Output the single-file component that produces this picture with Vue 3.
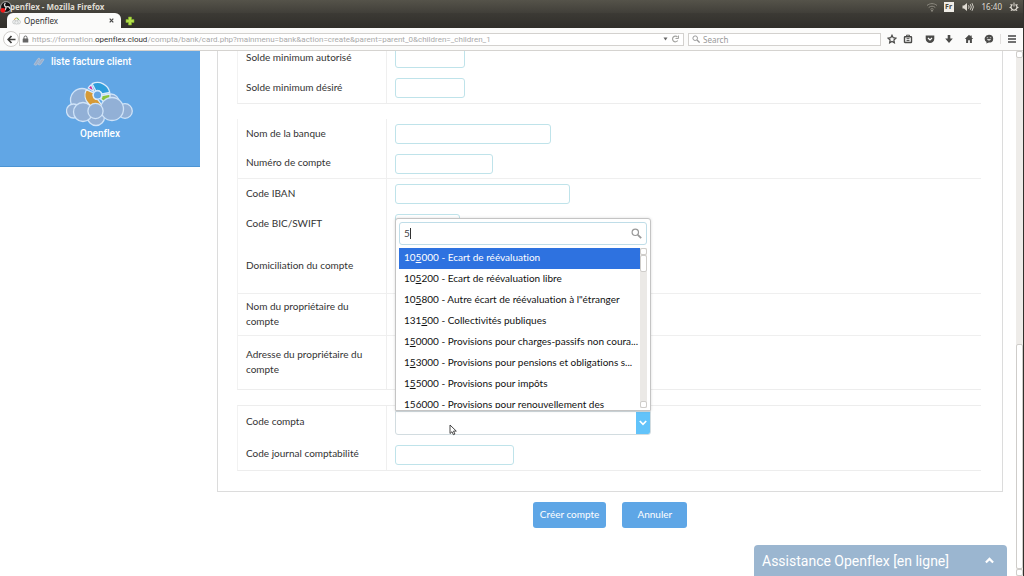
<script setup>
import { ref } from 'vue'

const query = ref('5')
const pageSearch = ref('')

const accounts = [
  { pre: '10', hit: '5', post: '000 - Ecart de réévaluation' },
  { pre: '10', hit: '5', post: '200 - Ecart de réévaluation libre' },
  { pre: '10', hit: '5', post: '800 - Autre écart de réévaluation à l"étranger' },
  { pre: '131', hit: '5', post: '00 - Collectivités publiques' },
  { pre: '1', hit: '5', post: '0000 - Provisions pour charges-passifs non coura...' },
  { pre: '1', hit: '5', post: '3000 - Provisions pour pensions et obligations s...' },
  { pre: '1', hit: '5', post: '5000 - Provisions pour impôts' },
  { pre: '1', hit: '5', post: '6000 - Provisions pour renouvellement des' },
]

const bankRows = [
  { id: 'banque', label: 'Nom de la banque', size: 'w-bank' },
  { id: 'numero', label: 'Numéro de compte', size: 'w-number', ruled: true },
  { id: 'iban', label: 'Code IBAN', size: 'w-iban' },
  { id: 'bic', label: 'Code BIC/SWIFT', size: 'w-bic' },
  { id: 'domiciliation', label: 'Domiciliation du compte', area: true, row: 'r-dom', ruled: true },
  { id: 'proprietaire', label: 'Nom du propriétaire du compte', size: 'w-bank', row: 'r-owner', ruled: true },
  { id: 'adresse', label: 'Adresse du propriétaire du compte', area: true, row: 'r-address' },
]
</script>

<template>
  <div class="window">
    <header class="titlebar">
      <svg class="app-icon" viewBox="0 0 12 12" aria-hidden="true">
        <circle cx="6" cy="6" r="5.4" fill="#111" stroke="#ddd" stroke-width="0.7" />
        <path d="M6 6C4 5 4 3 5.500 2M6 6c2-1 4 0 4 2M6 6c0 2-1 3.500-3 3.500" fill="none" stroke="#ddd" stroke-width="1.300" />
        <circle cx="2.900" cy="9.300" r="2.400" fill="#f01818" />
      </svg>
      <span class="window-title">penflex - Mozilla Firefox</span>
      <div class="tray">
        <svg width="12" height="12" viewBox="0 0 12 12" fill="none" stroke="#8d8a80" aria-hidden="true">
          <path d="M1 4.500c3-2.500 7-2.500 10 0M2.700 6.500c2-1.700 4.600-1.700 6.600 0M4.400 8.300c1-.8 2.200-.8 3.200 0" />
          <circle cx="6" cy="9.700" r="0.600" fill="#aaa79d" />
        </svg>
        <span class="lang">Fr</span>
        <svg width="12" height="12" viewBox="0 0 12 12" fill="none" stroke="#dfdbd2" aria-hidden="true">
          <path d="M.5 4.500H2L5 2v8L2 7.500H.5z" fill="#dfdbd2" stroke="none" />
          <path d="M6.500 4.300q1.200 1.700 0 3.400M8.300 3.200q2 2.800 0 5.600M10 2.200q2.800 3.800 0 7.600" stroke-width="0.900" />
        </svg>
        <time>16:40</time>
        <svg width="10" height="10" viewBox="0 0 10 10" fill="none" stroke="#dfdbd2" aria-hidden="true">
          <path d="M3.500 2.500a3 3 0 1 0 3 0" stroke-width="1.300" />
          <path d="M5 .5v4M.5 5.500h1.500M8 5.500h1.500M1.800 9l1-1M8.200 9l-1-1M1.500 2l1 1M8.500 2l-1 1" />
        </svg>
      </div>
    </header>

    <nav class="tabs" aria-label="Onglets">
      <div class="tab">
        <svg width="9" height="9" viewBox="0 0 9 9" aria-hidden="true">
          <g fill="#eef0f0" stroke="#b8bcbc" stroke-width="0.600">
            <circle cx="2.500" cy="6" r="1.900" /><circle cx="6.500" cy="6" r="2" /><circle cx="4.500" cy="6.500" r="1.700" />
          </g>
          <path d="M2.500 4a2 2 0 0 1 2-2" fill="none" stroke="#e0a950" />
          <path d="M4.500 2a2 2 0 0 1 2 2" fill="none" stroke="#72b54a" />
        </svg>
        <span class="tab-name">Openflex</span>
        <button class="bare" aria-label="Fermer l'onglet">
          <svg width="5" height="5" viewBox="0 0 5 5"><path d="M.7.7l3.600 3.600M4.300.7.7 4.300" stroke="#444" stroke-width="1.200" /></svg>
        </button>
      </div>
      <button class="bare new-tab" aria-label="Nouvel onglet">
        <svg width="10" height="10" viewBox="0 0 10 10"><path d="M3.500 1h3v2.500H9v3H6.500V9h-3V6.500H1v-3h2.500z" fill="#b4e04a" stroke="#7fae2a" stroke-width="0.600" /></svg>
      </button>
    </nav>

    <div class="toolbar">
      <button class="back" aria-label="Retour">
        <svg width="9" height="9" viewBox="0 0 9 9" fill="none" stroke="#3f3f3d" stroke-width="1.700"><path d="M8.500 4.500h-7M4.500 1 1.200 4.500 4.500 8" /></svg>
      </button>
      <div class="address">
        <svg width="7" height="8" viewBox="0 0 7 8" aria-hidden="true">
          <path d="M2 4V2.500a1.500 1.500 0 0 1 3 0V4" fill="none" stroke="#666" />
          <rect x="0.700" y="3.500" width="5.600" height="4" rx="0.500" fill="#666" />
        </svg>
        <span class="url">https://formation.<b>openflex.cloud</b>/compta/bank/card.php?mainmenu=bank&amp;action=create&amp;parent=parent_0&amp;children=_children_1</span>
        <svg class="push" width="5" height="4" viewBox="0 0 5 4" aria-hidden="true"><path d="M.5.500h4L2.500 3.500z" fill="#666" /></svg>
        <button class="bare" aria-label="Recharger">
          <svg width="9" height="8" viewBox="0 0 9 8" fill="none" stroke="#a5a5a2"><path d="M6.700 5.500A2.800 2.800 0 1 1 6.500 2.200" stroke-width="1.200" /><path d="M7.500.5v3h-3" /></svg>
        </button>
      </div>
      <label class="search">
        <svg width="8" height="8" viewBox="0 0 8 8" fill="none" stroke="#999" aria-hidden="true"><circle cx="3.200" cy="3.200" r="2.300" /><path d="M5 5l2.600 2.600" stroke-width="1.300" /></svg>
        <input v-model="pageSearch" type="text" placeholder="Search" aria-label="Search" />
      </label>
      <div class="tools">
        <button class="bare" aria-label="Marque-page">
          <svg width="10" height="10" viewBox="0 0 10 10" fill="none" stroke="#4b4b49" stroke-width="1.200"><path d="M5 1.200l1.200 2.500 2.700.4-2 1.900.5 2.800L5 7.500 2.600 8.800l.5-2.800-2-1.900 2.700-.4z" /></svg>
        </button>
        <button class="bare clip" aria-label="Liste">
          <svg width="10" height="10" viewBox="0 0 10 10" fill="none" stroke="#4b4b49"><rect x="1.500" y="2.700" width="7" height="5.800" rx="0.500" stroke-width="1.400" /><path d="M3.500 2.500V1.200h3v1.300M3.500 4.700h3M3.500 6.600h3" /></svg>
        </button>
        <button class="bare" aria-label="Pocket">
          <svg width="10" height="10" viewBox="0 0 10 10"><path d="M.7 1.500h8.600v3.200a4.300 4.300 0 0 1-8.600 0z" fill="#4b4b49" /><path d="M3 4l2 2 2-2" fill="none" stroke="#fff" stroke-width="1.200" /></svg>
        </button>
        <button class="bare" aria-label="Téléchargements">
          <svg width="10" height="10" viewBox="0 0 10 10"><path d="M3.700 1h2.600v3.500h2.500L5 9 1.200 4.500h2.500z" fill="#4b4b49" /></svg>
        </button>
        <button class="bare" aria-label="Accueil">
          <svg width="10" height="10" viewBox="0 0 10 10"><path d="M5 .8.800 5h1.300v4h2V6.200h1.800V9h2V5h1.300L7.700 3.400V1.500H6.500v.8z" fill="#4b4b49" /></svg>
        </button>
        <button class="bare" aria-label="Messages">
          <svg width="10" height="10" viewBox="0 0 10 10"><path d="M5 .8a4.200 3.900 0 0 1 0 7.800L2.300 9.500l.2-1.600A4.200 3.900 0 0 1 5 .8z" fill="#4b4b49" /><path d="M2.800 5.200q2.200 2.600 4.400 0z" fill="#fff" /><path d="M2.800 3.700h1.400M5.800 3.700h1.400" stroke="#bbb" /></svg>
        </button>
        <button class="bare menu" aria-label="Menu">
          <svg width="10" height="10" viewBox="0 0 10 10" stroke="#444" stroke-width="1.700"><path d="M1 2h8M1 5h8M1 8h8" /></svg>
        </button>
      </div>
    </div>

    <div class="page">
      <aside class="sidebar">
        <a class="side-link" href="#factures">
          <svg width="12" height="10" viewBox="0 0 12 10" fill="#9aafcb" stroke="#b7c6da" stroke-width="0.700" aria-hidden="true">
            <path d="M1 7.500 5 1.500q1.500-1 2 .5L4 7.500q-1 1.500-3 0z" /><path d="M5 7.500 8 2.500q2-1 3 0L8 7q-1 1.500-3 .5z" />
          </svg>
          liste facture client
        </a>
        <a class="brand" href="#openflex">
          <svg width="68" height="46" viewBox="0 0 68 46" aria-hidden="true">
            <g fill="#92b0d6" stroke="#cfe3f8" stroke-width="1.300">
              <circle cx="45" cy="21" r="8" /><circle cx="16" cy="19" r="11.500" /><circle cx="7.500" cy="30" r="7" />
              <circle cx="59" cy="30" r="7.300" /><circle cx="30" cy="36" r="8.500" /><circle cx="17" cy="31" r="9.500" />
            </g>
            <g stroke="#dcecfb" stroke-width="1.300" stroke-linejoin="round">
              <path d="M29.800 9.800 26.200 2.700A12.500 12.500 0 0 1 43.800 11.500L36 13A4.600 4.600 0 0 0 29.800 9.800z" fill="#2f9ddb" />
              <path d="M36 14.500 44 13A12.500 12.500 0 0 1 40.800 22.500L34.500 18A4.600 4.600 0 0 0 36 14.500z" fill="#8ac43f" />
              <path d="M32 18.600 36.500 25.500A12.500 12.500 0 0 1 20.200 8.700L27.500 11.800A4.600 4.600 0 0 0 32 18.600z" fill="#d69a36" />
              <path d="M28 10.500 22.200 7A12.500 12.500 0 0 1 25.300 3.800z" fill="#d02a9b" />
              <circle cx="31.500" cy="14" r="4.200" fill="#62a5e3" />
            </g>
            <g fill="#92b0d6" stroke="#cfe3f8" stroke-width="1.300">
              <circle cx="46" cy="28" r="11.500" /><circle cx="29.500" cy="30" r="7.600" />
            </g>
          </svg>
          <span>Openflex</span>
        </a>
      </aside>

      <main class="content">
        <form class="panel" @submit.prevent>
          <table class="grid">
            <tbody>
              <tr>
                <th scope="row"><label for="solde-autorise">Solde minimum autorisé</label></th>
                <td><input id="solde-autorise" class="field w-amount" type="text" /></td>
              </tr>
              <tr>
                <th scope="row"><label for="solde-desire">Solde minimum désiré</label></th>
                <td><input id="solde-desire" class="field w-amount" type="text" /></td>
              </tr>
            </tbody>
          </table>

          <table class="grid">
            <tbody>
              <tr v-for="r in bankRows" :key="r.id" :class="[r.row, { ruled: r.ruled }]">
                <th scope="row"><label :for="r.id">{{ r.label }}</label></th>
                <td>
                  <textarea v-if="r.area" :id="r.id" class="field area"></textarea>
                  <input v-else :id="r.id" class="field" :class="r.size" type="text" />
                </td>
              </tr>
            </tbody>
          </table>

          <table class="grid topped">
            <tbody>
              <tr class="r-code">
                <th scope="row"><label for="code-compta">Code compta</label></th>
                <td>
                  <div class="combo">
                    <button id="code-compta" class="combo-toggle" type="button" aria-haspopup="listbox" aria-expanded="true">
                      <span class="chevron">
                        <svg width="8" height="6" viewBox="0 0 8 6" fill="none" stroke="#fff" stroke-width="1.700"><path d="M.8 1 4 4.300 7.200 1" /></svg>
                      </span>
                    </button>
                    <div class="dropdown">
                      <label class="filter">
                        <span class="typed"><input v-model="query" type="text" aria-label="Filtrer les comptes" /><i class="caret"></i></span>
                        <svg width="11" height="11" viewBox="0 0 11 11" fill="none" stroke="#999" aria-hidden="true"><circle cx="4.300" cy="4.300" r="3.200" stroke-width="1.200" /><path d="M6.800 6.800l3.400 3.400" stroke-width="1.800" /></svg>
                      </label>
                      <div class="results">
                        <ul role="listbox" aria-label="Comptes">
                          <li v-for="(a, i) in accounts" :key="i" role="option" :aria-selected="i === 0" :class="{ active: i === 0 }">{{ a.pre }}<u>{{ a.hit }}</u>{{ a.post }}</li>
                        </ul>
                        <div class="scroll small"><i class="cap up"></i><i class="thumb"></i><i class="cap down"></i></div>
                      </div>
                    </div>
                    <svg class="pointer" width="8" height="12" viewBox="0 0 8 12" aria-hidden="true"><path d="M1 1v8.500l2-1.800 1.400 3 1.500-.7-1.400-2.900H7.300z" fill="#fff" stroke="#333" stroke-width="0.900" /></svg>
                  </div>
                </td>
              </tr>
              <tr class="r-journal">
                <th scope="row"><label for="journal">Code journal comptabilité</label></th>
                <td><input id="journal" class="field w-journal" type="text" /></td>
              </tr>
            </tbody>
          </table>
        </form>
        <div class="actions">
          <button class="primary" type="button">Créer compte</button>
          <button class="primary" type="button">Annuler</button>
        </div>
      </main>

      <div class="scroll main-scroll"><i class="cap up"></i><i class="thumb"></i><i class="cap down"></i></div>

      <button class="assist" type="button">
        <span>Assistance Openflex [en ligne]</span>
        <svg width="9" height="7" viewBox="0 0 9 7" fill="none" stroke="#fff" stroke-width="2.200"><path d="M.9 5.500 4.500 1.900 8.100 5.500" /></svg>
      </button>
    </div>
  </div>
</template>

<style>
body {
  background: #fff;
}
</style>

<style scoped>
* {
  box-sizing: border-box;
}
.window {
  display: flex;
  flex-direction: column;
  height: 100vh;
  overflow: hidden;
  border-right: 1px solid #32302c;
  font-family: "Noto Sans", sans-serif;
  font-variant-ligatures: none;
  color: #333;
}
button,
input,
textarea {
  font: inherit;
  color: inherit;
}
svg {
  display: block;
  flex: none;
}
.bare {
  padding: 0;
  border: 0;
  background: none;
}
.titlebar {
  display: flex;
  align-items: center;
  flex: none;
  height: 13px;
  background: linear-gradient(#55534a, #413f39);
  color: #dfdbd2;
  font-size: 8px;
}
.app-icon {
  width: 12px;
  height: 12px;
}
.window-title {
  flex: 1;
  margin-left: -2px;
  font-weight: 700;
  font-size: 8px;
}
.tray {
  display: flex;
  align-items: center;
  gap: 6px;
  padding-right: 4px;
}
.tray time {
  padding: 0 1px 0 2px;
}
.lang {
  width: 10px;
  margin-right: 2px;
  background: #efece6;
  color: #4a483f;
  font-weight: 700;
  font-size: 7px;
  line-height: 10px;
  text-align: center;
}
.tabs {
  display: flex;
  flex: none;
  height: 15px;
  padding-left: 7px;
  background: linear-gradient(#3c3a35, #302e2a);
}
.tab {
  display: flex;
  align-items: center;
  gap: 3px;
  width: 114px;
  padding: 0 7px 0 5px;
  border-radius: 6px 6px 0 0;
  background: #fbfbfa;
  font-size: 8px;
}
.tab-name {
  flex: 1;
}
.new-tab {
  margin-left: 4px;
}
.toolbar {
  display: flex;
  align-items: center;
  flex: none;
  gap: 4px;
  height: 23px;
  padding: 0 6px 0 3px;
  border-bottom: 1px solid #d5d3d0;
  background: #fbfbfa;
  font-size: 8px;
}
.back {
  display: grid;
  place-items: center;
  flex: none;
  width: 16px;
  height: 16px;
  padding: 0;
  border: 1px solid #cfcdca;
  border-radius: 8px;
  background: #fff;
}
.address,
.search {
  display: flex;
  align-items: center;
  height: 13px;
  border: 1px solid #d3d1ce;
  background: #fff;
}
.address {
  flex: 1;
  gap: 3px;
  min-width: 0;
  margin-left: -4px;
  padding: 0 3px 0 2px;
}
.url {
  overflow: hidden;
  color: #aaa;
  font-family: Roboto, sans-serif;
  white-space: nowrap;
}
.url b {
  color: #333;
  font-weight: 400;
}
.push {
  margin-left: auto;
}
.search {
  flex: none;
  gap: 3px;
  width: 193px;
  padding: 0 3px;
}
.search input {
  flex: 1;
  min-width: 0;
  padding: 0;
  border: 0;
  outline: 0;
  background: none;
}
.search input::placeholder {
  color: #999;
}
.tools {
  display: flex;
  justify-content: space-between;
  flex: none;
  width: 132px;
  padding-left: 2px;
}
.clip {
  margin: 0 2px 0 -4px;
}
.menu {
  margin-left: -4px;
  padding-left: 6px;
  border-left: 1px solid #e2e0de;
}
.page {
  position: relative;
  display: flex;
  flex: 1;
  min-height: 0;
  overflow: hidden;
}
.sidebar {
  display: flex;
  flex-direction: column;
  flex: none;
  width: 200px;
  height: 116px;
  border-bottom: 1px solid #4c94d3;
  background: #61a6e5;
  font-family: Roboto, sans-serif;
  font-size: 10px;
  font-weight: 500;
}
.sidebar a {
  color: #fff;
  text-decoration: none;
}
.side-link {
  display: flex;
  align-items: center;
  gap: 6px;
  padding: 3px 0 0 33px;
  line-height: 15px;
}
.brand {
  display: flex;
  flex-direction: column;
  align-items: center;
  padding-top: 12px;
  line-height: 14px;
}
.content {
  flex: 1;
  min-width: 0;
  margin-top: -8px;
  padding: 0 13px 0 17px;
}
.panel {
  padding: 0 21px 20px 19px;
  border: 1px solid #dcdcdc;
  border-top: 0;
}
.grid {
  width: 100%;
  border-collapse: separate;
  border-spacing: 0;
  margin-bottom: 15px;
  border-left: 1px solid #f2f2f2;
  border-bottom: 1px solid #ededed;
}
.grid:last-child {
  margin-bottom: 0;
}
.topped {
  border-top: 1px solid #ededed;
}
.grid tr {
  height: 30px;
}
.grid .r-dom {
  height: 55px;
}
.grid .r-owner {
  height: 42px;
}
.grid .r-address {
  height: 53px;
}
.grid .r-code {
  height: 33px;
}
.grid .r-journal {
  height: 31px;
}
.grid th,
.grid td {
  padding: 0 8px;
  vertical-align: middle;
}
.grid th {
  width: 149px;
  padding-bottom: 2px;
  border-right: 1px solid #efefef;
  font-family: Lato, sans-serif;
  font-size: 10px;
  font-weight: 400;
  line-height: 15px;
  text-align: left;
}
.ruled th,
.ruled td {
  border-bottom: 1px solid #efefef;
}
.field {
  display: block;
  height: 20px;
  padding: 0 4px;
  border: 1px solid #bfe3ea;
  border-radius: 3px;
  outline: 0;
  background: #fff;
}
.w-amount {
  width: 70px;
}
.w-bank {
  width: 156px;
}
.w-number {
  width: 98px;
}
.w-iban {
  width: 175px;
}
.w-bic {
  width: 65px;
}
.w-journal {
  width: 119px;
}
.area {
  width: 240px;
  height: 42px;
  resize: none;
}
.combo {
  position: relative;
  width: 256px;
}
.combo-toggle {
  display: flex;
  justify-content: flex-end;
  width: 100%;
  height: 24px;
  padding: 0;
  border: 1px solid #d2dce0;
  border-radius: 0 0 3px 3px;
  background: #fff;
}
.chevron {
  display: grid;
  place-items: center;
  align-self: stretch;
  width: 14px;
  background: #62c3fa;
  border-radius: 0 0 2px 0;
}
.dropdown {
  position: absolute;
  bottom: 100%;
  left: 0;
  width: 100%;
  padding: 3px 3px 2px;
  border: 1px solid #c4c4c4;
  border-radius: 3px 3px 0 0;
  background: #fff;
  box-shadow: 0 0 3px rgba(0, 0, 0, 0.15);
  color: #111;
  font-family: Lato, sans-serif;
  font-size: 10px;
}
.filter {
  display: flex;
  align-items: center;
  justify-content: space-between;
  height: 23px;
  padding: 0 4px;
  border: 1px solid #bfdde8;
  border-radius: 3px;
}
.typed {
  display: flex;
  align-items: center;
}
.filter input {
  width: 6px;
  padding: 0;
  border: 0;
  outline: 0;
  color: #444;
}
.caret {
  width: 1px;
  height: 11px;
  background: #333;
}
.results {
  display: flex;
  height: 160px;
  margin-top: 3px;
}
.results ul {
  flex: 1;
  min-width: 0;
  margin: 0;
  padding: 0;
  overflow: hidden;
  list-style: none;
}
.results li {
  height: 21px;
  padding: 0 5px;
  line-height: 19px;
  white-space: nowrap;
}
.results .active {
  background: #2e72e0;
  color: #fff;
}
.scroll {
  display: flex;
  flex-direction: column;
  flex: none;
  width: 7px;
  background: #ebe9e6;
}
.scroll i {
  border: 1px solid #cfcdca;
  border-radius: 2px;
  background: #fff;
}
.cap {
  height: 7px;
}
.small .thumb {
  height: 17px;
}
.down {
  margin-top: auto;
}
.main-scroll {
  background: #eeece9;
}
.main-scroll .thumb {
  height: 225px;
  margin-top: 286px;
}
.pointer {
  position: absolute;
  left: 54px;
  top: 13px;
}
.actions {
  display: flex;
  justify-content: center;
  gap: 16px;
  padding-top: 10px;
}
.primary {
  height: 26px;
  padding: 0 7px 2px;
  border: 0;
  border-radius: 3px;
  background: #5ea6e6;
  color: #fff;
  font-family: Lato, sans-serif;
  font-size: 10px;
}
.primary + .primary {
  padding: 0 15px 2px;
}
.assist {
  position: absolute;
  right: 16px;
  bottom: 0;
  display: flex;
  align-items: center;
  justify-content: space-between;
  width: 253px;
  height: 31px;
  padding: 0 13px 0 8px;
  border: 0;
  border-radius: 4px 4px 0 0;
  background: #9bb6d0;
  color: #fff;
  font-family: Roboto, sans-serif;
  font-size: 14px;
}
</style>
